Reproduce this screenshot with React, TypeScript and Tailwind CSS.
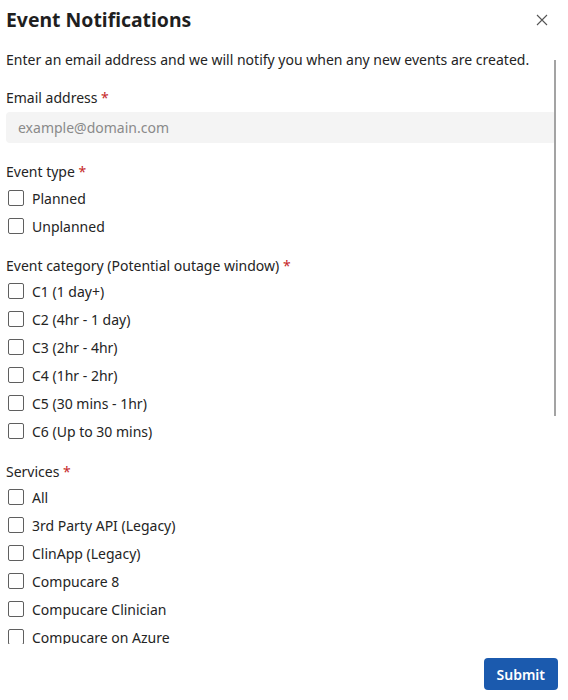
import React from "react";

const font = { fontFamily: '"Noto Sans", "Open Sans", sans-serif' };

function Req() {
  return <span className="text-[#c62828]"> *</span>;
}

function Check({ label }: { label: string }) {
  return (
    <label className="flex h-[28px] items-center">
      <span className="ml-[8px] h-[16px] w-[16px] shrink-0 rounded-[2px] border border-[#5f5f5f] bg-white" />
      <span className="ml-[8px] text-[14px] text-[#242424]">{label}</span>
    </label>
  );
}

export default function App() {
  return (
    <div className="flex h-[700px] w-[568px] flex-col bg-white text-[#242424]" style={font}>
      <div className="flex h-[40px] items-center justify-between pl-[6px] pr-[20px]">
        <h1 className="text-[19.4px] font-bold leading-none text-[#1f1f1f]">Event Notifications</h1>
        <svg width="12" height="12" viewBox="0 0 12 12" className="text-[#555]">
          <path d="M1 1L11 11M11 1L1 11" stroke="currentColor" strokeWidth="1.1" />
        </svg>
      </div>
      <div className="relative h-[604px] overflow-hidden">
        <div className="flex flex-col pl-[6px] pr-[12px]">
          <p className="mt-[10px] text-[14px] leading-[20px]">
            Enter an email address and we will notify you when any new events are created.
          </p>
          <div className="mt-[18px] text-[14px] leading-[20px]">
            Email address<Req />
          </div>
          <div className="mt-[4px] flex h-[31px] items-center rounded-[4px] bg-[#f4f4f4] pl-[12px] text-[14px] text-[#8a8a8a]">
            example@domain.com
          </div>
          <div className="mt-[19px] text-[14px] leading-[20px]">
            Event type<Req />
          </div>
          <div className="-ml-[6px] mt-[2px] flex flex-col">
            <Check label="Planned" />
            <Check label="Unplanned" />
          </div>
          <div className="mt-[16px] text-[14px] leading-[20px]">
            Event category (Potential outage window)<Req />
          </div>
          <div className="-ml-[6px] mt-[1px] flex flex-col">
            <Check label="C1 (1 day+)" />
            <Check label="C2 (4hr - 1 day)" />
            <Check label="C3 (2hr - 4hr)" />
            <Check label="C4 (1hr - 2hr)" />
            <Check label="C5 (30 mins - 1hr)" />
            <Check label="C6 (Up to 30 mins)" />
          </div>
          <div className="mt-[17px] text-[14px] leading-[20px]">
            Services<Req />
          </div>
          <div className="-ml-[6px] mt-[1px] flex flex-col">
            <Check label="All" />
            <Check label="3rd Party API (Legacy)" />
            <Check label="ClinApp (Legacy)" />
            <Check label="Compucare 8" />
            <Check label="Compucare Clinician" />
            <Check label="Compucare on Azure" />
          </div>
        </div>
        <div className="absolute right-[12px] top-[20px] h-[356px] w-[2px] bg-[#a3a3a3]" />
      </div>
      <div className="flex flex-1 items-start justify-end pr-[10px] pt-[14px]">
        <button className="h-[32px] rounded-[4px] bg-[#1b5aae] px-[13px] text-[14px] font-semibold text-white">
          Submit
        </button>
      </div>
    </div>
  );
}
